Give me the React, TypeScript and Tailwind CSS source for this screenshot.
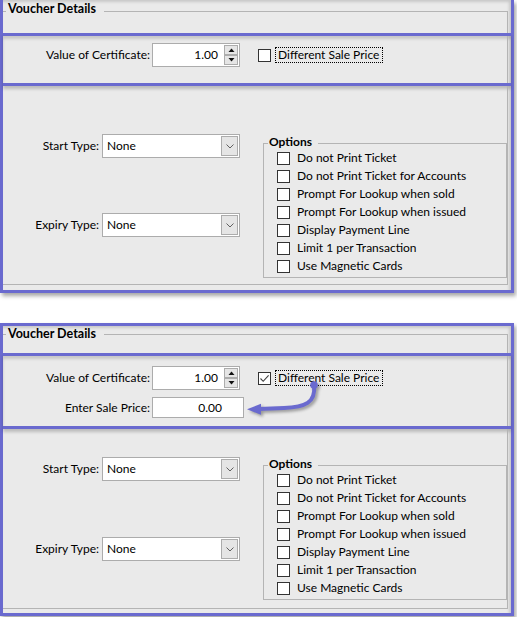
const options = [
  "Do not Print Ticket",
  "Do not Print Ticket for Accounts",
  "Prompt For Lookup when sold",
  "Prompt For Lookup when issued",
  "Display Payment Line",
  "Limit 1 per Transaction",
  "Use Magnetic Cards",
];

function Checkbox({ checked = false }: { checked?: boolean }) {
  return (
    <div className="w-[13px] h-[13px] shrink-0 border border-[#333333] bg-white flex items-center justify-center">
      {checked && (
        <svg width="11" height="11" viewBox="0 0 11 11">
          <path d="M1.5 5.5 L4.2 8.3 L9.6 2.4" fill="none" stroke="#404040" strokeWidth="1.1" />
        </svg>
      )}
    </div>
  );
}

function SpinButton({ up = false }: { up?: boolean }) {
  return (
    <div className="w-[14px] h-[10px] border border-[#acacac] bg-[#e5e5e5] flex items-center justify-center">
      <svg width="7" height="4" viewBox="0 0 7 4">
        {up ? <polygon points="0.5,4 3.5,0.5 6.5,4" fill="#111" /> : <polygon points="0.5,0 3.5,3.5 6.5,0" fill="#111" />}
      </svg>
    </div>
  );
}

function SpinBox({ value }: { value: string }) {
  return (
    <div className="w-[88px] h-[24px] border border-[#acacac] bg-white flex">
      <div className="flex-1 text-right pr-[6px] leading-[22px]">{value}</div>
      <div className="flex flex-col pt-[1px] pr-[1px]">
        <SpinButton up />
        <SpinButton />
      </div>
    </div>
  );
}

function Combo() {
  return (
    <div className="w-[138px] h-[24px] border border-[#acacac] bg-white flex items-center p-[1px]">
      <span className="flex-1 pl-[3px] leading-[20px]">None</span>
      <div className="w-[17px] h-full border border-[#acacac] bg-[#e5e5e5] flex items-center justify-center">
        <svg width="8" height="5" viewBox="0 0 8 5">
          <polyline points="0.5,0.5 4,4 7.5,0.5" fill="none" stroke="#606060" />
        </svg>
      </div>
    </div>
  );
}

function OptionsGroup() {
  return (
    <div className="w-[244px]">
      <div className="flex h-[15px]">
        <div className="w-[5px] mt-[9px] border-t border-l border-[#b4b4b4]" />
        <div className="pl-[1px] pr-[6px] font-bold leading-[15px]">Options</div>
        <div className="flex-1 mt-[9px] border-t border-r border-[#b4b4b4]" />
      </div>
      <div className="border-x border-b border-[#b4b4b4] pb-[2px]">
        {options.map((o) => (
          <div key={o} className="flex items-center h-[18px] pl-[13px]">
            <Checkbox />
            <span className="ml-[7px] leading-[18px]">{o}</span>
          </div>
        ))}
      </div>
    </div>
  );
}

function TypeRow({ label }: { label: string }) {
  return (
    <div className="flex items-center h-[24px]">
      <div className="w-[99px] text-right pr-[3px]">{label}</div>
      <Combo />
    </div>
  );
}

function SalePriceToggle({ checked }: { checked: boolean }) {
  return (
    <div className="flex items-center ml-[18px]">
      <Checkbox checked={checked} />
      <div className="ml-[4px] h-[16px] pl-[2px] pr-[3px] border border-dotted border-black leading-[14px]">
        Different Sale Price
      </div>
    </div>
  );
}

export default function App() {
  return (
    <div className="w-[517px] h-[617px] bg-white text-black text-[12px] font-['Lato',sans-serif]">
      {/* first capture */}
      <div className="w-[514px] border-x-[3px] border-b-[3px] border-[#6a6acf] bg-[#eaeaea] shadow-[inset_-2px_2px_3px_rgba(0,0,0,0.15),2px_3px_4px_rgba(0,0,0,0.35)]">
        <div className="h-[33px] flex pr-[3px]">
          <div className="w-[3px] mt-[11px] border-t border-[#b4b4b4]" />
          <div className="pl-[2px] pr-[8px] mt-[1px] font-bold text-[12.5px] leading-[15px]">Voucher Details</div>
          <div className="flex-1 mt-[11px] border-t border-r border-[#b4b4b4]" />
        </div>

        <div className="h-[53px] border-y-[3px] border-[#6a6acf] pr-[3px] shadow-[inset_0_3px_3px_rgba(0,0,0,0.15),0_3px_3px_rgba(0,0,0,0.2)]">
          <div className="h-full border-r border-[#b4b4b4] pt-[7px]">
            <div className="flex items-center">
              <div className="w-[149px] text-right pr-[2px]">Value of Certificate:</div>
              <SpinBox value="1.00" />
              <SalePriceToggle checked={false} />
            </div>
          </div>
        </div>

        <div className="h-[204px] pr-[3px]">
          <div className="h-[199px] border-r border-b border-[#b4b4b4] flex">
            <div className="w-[237px] pt-[48px]">
              <TypeRow label="Start Type:" />
              <div className="mt-[55px]">
                <TypeRow label="Expiry Type:" />
              </div>
            </div>
            <div className="ml-[23px] mt-[48px]">
              <OptionsGroup />
            </div>
          </div>
        </div>
      </div>

      {/* second capture */}
      <div className="relative mt-[30px] w-[514px] border-[3px] border-[#6a6acf] bg-[#eaeaea] shadow-[inset_-2px_2px_3px_rgba(0,0,0,0.15),2px_3px_4px_rgba(0,0,0,0.35)]">
        <div className="h-[27px] flex pr-[3px]">
          <div className="w-[3px] mt-[8px] border-t border-[#b4b4b4]" />
          <div className="pl-[2px] pr-[8px] font-bold text-[12.5px] leading-[15px]">Voucher Details</div>
          <div className="flex-1 mt-[8px] border-t border-r border-[#b4b4b4]" />
        </div>

        <div className="h-[76px] border-y-[3px] border-[#6a6acf] pr-[3px] shadow-[inset_0_3px_3px_rgba(0,0,0,0.15),0_3px_3px_rgba(0,0,0,0.2)]">
          <div className="h-full border-r border-[#b4b4b4] pt-[10px]">
            <div className="flex items-center">
              <div className="w-[149px] text-right pr-[2px]">Value of Certificate:</div>
              <SpinBox value="1.00" />
              <SalePriceToggle checked />
            </div>
            <div className="flex items-center mt-[7px]">
              <div className="w-[149px] text-right pr-[2px]">Enter Sale Price:</div>
              <div className="w-[92px] h-[21px] border border-[#acacac] bg-white text-right pr-[21px] leading-[19px]">
                0.00
              </div>
            </div>
          </div>
        </div>

        <div className="h-[184px] pr-[3px]">
          <div className="h-[180px] border-r border-b border-[#b4b4b4] flex">
            <div className="w-[237px] pt-[28px]">
              <TypeRow label="Start Type:" />
              <div className="mt-[56px]">
                <TypeRow label="Expiry Type:" />
              </div>
            </div>
            <div className="ml-[23px] mt-[27px]">
              <OptionsGroup />
            </div>
          </div>
        </div>

        <svg
          className="absolute -left-[3px] -top-[3px] pointer-events-none drop-shadow-[2px_2px_1.5px_rgba(0,0,0,0.35)]"
          width="517"
          height="293"
          viewBox="0 0 517 293"
        >
          <path d="M314 62 C316 80 305 84 284 85 L259 86" fill="none" stroke="#6a6acf" strokeWidth="4" strokeLinecap="round" />
          <circle cx="314" cy="62" r="3.8" fill="#6a6acf" />
          <polygon points="247,86.3 261,80.8 261,91.8" fill="#6a6acf" />
        </svg>
      </div>
    </div>
  );
}
